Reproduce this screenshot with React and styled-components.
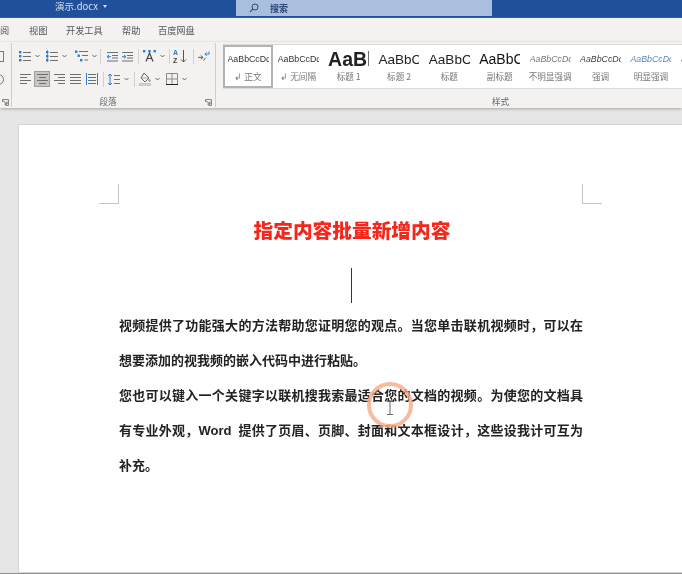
import React from "react";
import styled, { createGlobalStyle } from "styled-components";

const CJK = `"Noto Sans CJK SC", "Liberation Sans", sans-serif`;

const GlobalStyle = createGlobalStyle`
    html, body {
        margin: 0;
        padding: 0;
        width: 682px;
        height: 574px;
        overflow: hidden;
        background: #e6e6e6;
    }
`;

const Window = styled.div`
    position: relative;
    width: 682px;
    height: 574px;
    overflow: hidden;
    display: flex;
    flex-direction: column;
    font-family: ${CJK};
    background: #e6e6e6;
    filter: blur(0.3px);
`;

const TitleBar = styled.div`
    height: 18px;
    flex: none;
    display: flex;
    background: #20509a;
    border-bottom: 1px solid #2d5ea3;
    box-sizing: border-box;
`;

const FileName = styled.div`
    width: 236px;
    padding-left: 55px;
    box-sizing: border-box;
    font-size: 9.5px;
    line-height: 13px;
    color: #d5e1f1;
    display: flex;
    align-items: center;
    height: 13px;
`;

const DropMark = styled.span`
    width: 0;
    height: 0;
    margin-left: 5px;
    border-left: 2.5px solid transparent;
    border-right: 2.5px solid transparent;
    border-top: 3px solid #d5e1f1;
`;

const SearchBox = styled.div`
    width: 256px;
    height: 16px;
    display: flex;
    align-items: center;
    gap: 11px;
    padding-left: 13px;
    box-sizing: border-box;
    background: #a9bfdd;
    font-size: 9px;
    font-weight: 700;
    color: #2c4a78;
`;

const TabBar = styled.div`
    height: 24px;
    flex: none;
    display: flex;
    align-items: center;
    background: #f3f2f1;
    font-size: 9.2px;
    color: #555;
`;

const Tab = styled.span`
    width: ${({ $w }) => $w}px;
    flex: none;
`;

const Ribbon = styled.div`
    height: 66px;
    flex: none;
    display: flex;
    background: #f3f2f1;
    box-shadow: 0 1px 3px rgba(0, 0, 0, 0.28);
    z-index: 1;
`;

const Group = styled.div`
    flex: none;
    width: ${({ $w }) => $w}px;
    height: 64px;
    margin-top: 1px;
    box-sizing: border-box;
    border-right: 1px solid #cfcdcb;
    position: relative;
    display: flex;
    flex-direction: column;
    overflow: hidden;
`;

const ToolRow = styled.div`
    display: flex;
    align-items: center;
    height: 18px;
    padding-left: ${({ $pl }) => $pl ?? 5}px;
    margin-top: ${({ $mt }) => $mt}px;
`;

const Tool = styled.div`
    width: ${({ $w }) => $w}px;
    height: 16px;
    flex: none;
    box-sizing: border-box;
    display: flex;
    align-items: center;
    gap: 4px;
    padding-left: ${({ $pl }) => $pl ?? 2}px;
    background: ${({ $on }) => ($on ? "#c8c6c4" : "transparent")};
    border: ${({ $on }) => ($on ? "1px solid #a19f9d" : "none")};
`;

const Sep = styled.div`
    width: 1px;
    height: 15px;
    flex: none;
    background: #d2d0ce;
    margin: 0 ${({ $mr }) => $mr ?? 2}px 0 ${({ $ml }) => $ml ?? 1}px;
`;

const GroupLabel = styled.div`
    margin-top: auto;
    height: 14px;
    line-height: 16px;
    font-size: 8.6px;
    color: #666;
    text-align: center;
    padding-right: ${({ $pr }) => $pr ?? 0}px;
`;

const Launcher = styled.div`
    position: absolute;
    right: ${({ $r }) => $r}px;
    bottom: 1px;
    width: 7px;
    height: 7px;
    display: flex;
`;

const PartialRow = styled.div`
    height: 18px;
    margin-left: -7px;
    margin-top: ${({ $mt }) => $mt}px;
    display: flex;
    align-items: center;
`;

const Gallery = styled.div`
    height: 43px;
    margin: 1px 0 0 7px;
    display: flex;
    background: #fff;
    border-top: 1px solid #dcdad8;
    border-bottom: 1px solid #dcdad8;
    overflow: hidden;
`;

const StyleCell = styled.div`
    width: ${({ $on }) => ($on ? 50 : 50.4)}px;
    flex: none;
    box-sizing: border-box;
    display: flex;
    flex-direction: column;
    align-items: center;
    border: ${({ $on }) => ($on ? "2px solid #b5b3b1" : "none")};
    padding-top: ${({ $on }) => ($on ? 0 : 2)}px;
`;

const Sample = styled.div`
    width: 41px;
    height: 23px;
    line-height: 25px;
    overflow: hidden;
    white-space: nowrap;
    font-family: "Liberation Sans", sans-serif;
    font-size: ${({ $size }) => $size}px;
    font-weight: ${({ $bold }) => ($bold ? 700 : 400)};
    font-style: ${({ $italic }) => ($italic ? "italic" : "normal")};
    color: ${({ $color }) => $color ?? "#333"};
`;

const StyleName = styled.div`
    font-size: 8.6px;
    line-height: 13px;
    color: #777;
    white-space: nowrap;
`;

const Canvas = styled.div`
    flex: 1;
    padding: 16px 0 0 18px;
    background: #e6e6e6;
    min-height: 0;
`;

const Page = styled.div`
    position: relative;
    width: 666px;
    height: 449px;
    box-sizing: border-box;
    padding-top: 59px;
    background: #fff;
    border: 1px solid #d4d4d4;
    border-right: none;
`;

const Marks = styled.div`
    display: flex;
    justify-content: space-between;
    margin-left: 80px;
    width: 503px;
`;

const Mark = styled.div`
    width: 19px;
    height: 19px;
    border-bottom: 1px solid #c6c6c6;
    border-right: ${({ $flip }) => ($flip ? "none" : "1px solid #c6c6c6")};
    border-left: ${({ $flip }) => ($flip ? "1px solid #c6c6c6" : "none")};
`;

const Heading = styled.h1`
    margin: 0;
    height: 52px;
    line-height: 52px;
    width: 666px;
    text-align: center;
    font-size: 19.7px;
    font-weight: 900;
    color: #f5261b;
`;

const Caret = styled.div`
    width: 1px;
    height: 35px;
    margin: 12px 0 5px 332px;
    background: #333;
`;

const Body = styled.div`
    width: 464px;
    margin-left: 100px;
    font-size: 13px;
    line-height: 35px;
    font-weight: 700;
    color: #222;
`;

const Para = styled.p`
    margin: 0;
    text-align: justify;
    word-spacing: 3px;
    font-family: "Liberation Sans", ${CJK};
`;

const Pointer = styled.div`
    position: absolute;
    left: 348px;
    top: 257px;
    width: 46px;
    height: 46px;
    box-sizing: border-box;
    border: 4px solid rgba(246, 170, 130, 0.8);
    border-radius: 50%;
    display: flex;
    align-items: center;
    justify-content: center;
`;

const BottomLine = styled.div`
    height: 1px;
    flex: none;
    background: #8f8f8f;
`;

const GRAY = "#6f6f6f";
const BLUE = "#2b7cd3";

const Lines = ({ rows, w = 11, color = GRAY }) => (
    <svg width={w} height="12" viewBox={`0 0 ${w} 12`}>
        {rows.map(([x1, x2, y], i) => (
            <line key={i} x1={x1} x2={x2} y1={y + 0.5} y2={y + 0.5} stroke={color} />
        ))}
    </svg>
);

const Dots = ({ dots }) =>
    dots.map(([x, y], i) => <rect key={i} x={x} y={y} width="2.4" height="2.4" fill={BLUE} />);

const Chevron = () => (
    <svg width="5" height="4" viewBox="0 0 5 4">
        <path d="M0.5 1 L2.5 3 L4.5 1" fill="none" stroke="#666" />
    </svg>
);

const ListIcon = ({ numbered }) => (
    <svg width="12" height="12" viewBox="0 0 12 12">
        <Dots dots={[[0, 1], [0, 5], [0, 9]]} />
        {numbered && <rect x="1" y="0" width="1" height="12" fill={BLUE} opacity="0.6" />}
        <path d="M4 2.5H12M4 6.5H12M4 10.5H12" stroke={GRAY} />
    </svg>
);

const MultiLevelIcon = () => (
    <svg width="13" height="12" viewBox="0 0 13 12">
        <Dots dots={[[0, 0.5], [2.5, 4.5], [5, 9]]} />
        <path d="M4 1.5H13M7 5.5H13M9.5 10H13" stroke={GRAY} />
    </svg>
);

const IndentIcon = ({ more }) => (
    <svg width="11" height="11" viewBox="0 0 11 11">
        <path d="M0 1.5H11M5 4.5H11M5 7H11M0 10H11" stroke={GRAY} />
        <path d={more ? "M0 5.7H3M2 4L4 5.7L2 7.5" : "M4 5.7H1M2 4L0 5.7L2 7.5"} fill="none" stroke={BLUE} />
    </svg>
);

const AsianIcon = () => (
    <svg width="13" height="12" viewBox="0 0 13 12">
        <path d="M3 11.5L6.5 3L10 11.5M4.5 8.5H8.5" fill="none" stroke="#444" strokeWidth="1.2" />
        <Dots dots={[[0, 0], [5.3, 0], [10.5, 0]]} />
    </svg>
);

const SortIcon = () => (
    <svg width="14" height="14" viewBox="0 0 14 14">
        <text x="0" y="6" fontSize="7" fontWeight="700" fontFamily="Liberation Sans" fill={BLUE}>A</text>
        <text x="0" y="13.5" fontSize="7" fontWeight="700" fontFamily="Liberation Sans" fill="#444">Z</text>
        <path d="M10.5 1V13M8 10.5L10.5 13L13 10.5" fill="none" stroke="#555" />
    </svg>
);

const ShowIcon = () => (
    <svg width="13" height="12" viewBox="0 0 13 12">
        <path d="M0 7.5H5M3 5.5L5.5 7.5L3 9.5" fill="none" stroke="#555" />
        <path d="M12 1V4H7.5M9.5 2L7.5 4L9.5 6" fill="none" stroke={BLUE} />
        <path d="M8 8L6 11" stroke="#555" />
    </svg>
);

const DistributeIcon = () => (
    <svg width="12" height="12" viewBox="0 0 12 12">
        <path d="M0.5 0V12M11.5 0V12" stroke={BLUE} />
        <path d="M2 1.5H10M2 4.5H10M2 7.5H10M2 10.5H10" stroke={GRAY} />
    </svg>
);

const SpacingIcon = () => (
    <svg width="12" height="13" viewBox="0 0 12 13">
        <path d="M2 1V12M0 3L2 1L4 3M0 10L2 12L4 10" fill="none" stroke={BLUE} />
        <path d="M6 2.5H12M6 6.5H12M6 10.5H12" stroke={GRAY} />
    </svg>
);

const ShadeIcon = () => (
    <svg width="12" height="14" viewBox="0 0 12 14">
        <path d="M5 1L10 6L6 10L2 6Z" fill="none" stroke="#666" />
        <path d="M3 6H9" stroke="#aaa" />
        <circle cx="10.5" cy="8.5" r="1.2" fill="#999" />
        <rect x="0" y="11.5" width="12" height="2.5" fill="#d6d4d2" stroke="#aaa" strokeWidth="0.5" />
    </svg>
);

const BorderIcon = () => (
    <svg width="12" height="12" viewBox="0 0 12 12">
        <path d="M0.5 0.5H11.5V11.5M0.5 0.5V11.5M6 0.5V11.5M0.5 6H11.5" fill="none" stroke="#8a8a8a" />
        <path d="M0 11.5H12" stroke="#222" />
    </svg>
);

const LauncherIcon = () => (
    <svg width="7" height="7" viewBox="0 0 7 7">
        <path d="M0.5 3V0.5H6.5V6.5H3.5" fill="none" stroke="#8a8886" />
        <path d="M1 1.5L4.5 5M5 2.5V5.2H2.5" fill="none" stroke="#666" />
    </svg>
);

const SearchIcon = () => (
    <svg width="10" height="10" viewBox="0 0 12 12">
        <circle cx="7.2" cy="4.8" r="3.6" fill="none" stroke="#2c4a78" strokeWidth="1.2" />
        <path d="M4.6 7.4L1 11" stroke="#2c4a78" strokeWidth="1.3" />
    </svg>
);

const IBeam = () => (
    <svg width="8" height="14" viewBox="0 0 8 14" style={{ marginTop: 6 }}>
        <path d="M1 0.5H7M4 0.5V13.5M1 13.5H7" fill="none" stroke="#666" />
    </svg>
);

const tabs = [
    ["阅", 29],
    ["视图", 37],
    ["开发工具", 56],
    ["帮助", 36],
    ["百度网盘", 60],
];

const styleCells = [
    { sample: "AaBbCcDd", size: 8.8, name: "↲ 正文", on: true },
    { sample: "AaBbCcDd", size: 8.8, name: "↲ 无间隔" },
    { sample: "AaBbC", size: 19.5, bold: true, color: "#222", name: "标题 1" },
    { sample: "AaBbC", size: 13.5, color: "#222", name: "标题 2" },
    { sample: "AaBbC", size: 13.5, color: "#222", name: "标题" },
    { sample: "AaBbC", size: 14, color: "#111", name: "副标题" },
    { sample: "AaBbCcDd", size: 8.8, italic: true, color: "#777", name: "不明显强调" },
    { sample: "AaBbCcDd", size: 8.8, italic: true, color: "#444", name: "强调" },
    { sample: "AaBbCcDd", size: 8.8, italic: true, color: "#5b86c4", name: "明显强调" },
    { sample: "AaBbCcDd", size: 8.8, italic: true, color: "#777", name: "" },
];

const App = () => (
    <Window>
        <GlobalStyle />
        <TitleBar>
            <FileName>演示.docx<DropMark /></FileName>
            <SearchBox>
                <SearchIcon />
                搜索
            </SearchBox>
        </TitleBar>

        <TabBar>
            {tabs.map(([label, w]) => (
                <Tab key={label} $w={w}>{label}</Tab>
            ))}
        </TabBar>

        <Ribbon>
            <Group $w={12}>
                <PartialRow $mt={4}>
                    <svg width="11" height="11" viewBox="0 0 11 11">
                        <rect x="0.5" y="0.5" width="10" height="10" fill="none" stroke="#777" />
                    </svg>
                </PartialRow>
                <PartialRow $mt={5}>
                    <svg width="11" height="11" viewBox="0 0 11 11">
                        <circle cx="5.5" cy="5.5" r="5" fill="none" stroke="#777" />
                    </svg>
                </PartialRow>
                <Launcher $r={2}><LauncherIcon /></Launcher>
            </Group>

            <Group $w={204}>
                <ToolRow $mt={4}>
                    <Tool $w={27}><ListIcon /><Chevron /></Tool>
                    <Tool $w={29}><ListIcon numbered /><Chevron /></Tool>
                    <Tool $w={26}><MultiLevelIcon /><Chevron /></Tool>
                    <Sep />
                    <Tool $w={16} $pl={4}><IndentIcon /></Tool>
                    <Tool $w={18} $pl={3}><IndentIcon more /></Tool>
                    <Sep />
                    <Tool $w={27}><AsianIcon /><Chevron /></Tool>
                    <Sep />
                    <Tool $w={20} $pl={1}><SortIcon /></Tool>
                    <Sep />
                    <Tool $w={14}><ShowIcon /></Tool>
                </ToolRow>
                <ToolRow $mt={5} $pl={6}>
                    <Tool $w={16}><Lines rows={[[0, 11, 1], [0, 7, 4], [0, 11, 7], [0, 7, 10]]} /></Tool>
                    <Tool $w={16} $pl={2} $on><Lines rows={[[0, 11, 1], [2, 9, 4], [0, 11, 7], [2, 9, 10]]} /></Tool>
                    <Tool $w={18} $pl={4}><Lines rows={[[0, 11, 1], [4, 11, 4], [0, 11, 7], [4, 11, 10]]} /></Tool>
                    <Tool $w={16}><Lines rows={[[0, 11, 1], [0, 11, 4], [0, 11, 7], [0, 11, 10]]} /></Tool>
                    <Tool $w={18}><DistributeIcon /></Tool>
                    <Sep />
                    <Tool $w={27}><SpacingIcon /><Chevron /></Tool>
                    <Sep />
                    <Tool $w={27}><ShadeIcon /><Chevron /></Tool>
                    <Tool $w={26}><BorderIcon /><Chevron /></Tool>
                </ToolRow>
                <GroupLabel $pr={11}>段落</GroupLabel>
                <Launcher $r={3}><LauncherIcon /></Launcher>
            </Group>

            <Group $w={570}>
                <Gallery>
                    {styleCells.map((c, i) => (
                        <StyleCell key={i} $on={c.on}>
                            <Sample $size={c.size} $bold={c.bold} $italic={c.italic} $color={c.color}>
                                {c.sample}
                            </Sample>
                            <StyleName>{c.name}</StyleName>
                        </StyleCell>
                    ))}
                </Gallery>
                <GroupLabel>样式</GroupLabel>
            </Group>
        </Ribbon>

        <Canvas>
            <Page>
                <Marks>
                    <Mark />
                    <Mark $flip />
                </Marks>
                <Heading>指定内容批量新增内容</Heading>
                <Caret />
                <Body>
                    <Para>视频提供了功能强大的方法帮助您证明您的观点。当您单击联机视频时，可以在想要添加的视我频的嵌入代码中进行粘贴。</Para>
                    <Para>您也可以键入一个关键字以联机搜我索最适合您的文档的视频。为使您的文档具有专业外观，Word 提供了页眉、页脚、封面和文本框设计，这些设我计可互为补充。</Para>
                </Body>
                <Pointer><IBeam /></Pointer>
            </Page>
        </Canvas>
        <BottomLine />
    </Window>
);

export default App;
